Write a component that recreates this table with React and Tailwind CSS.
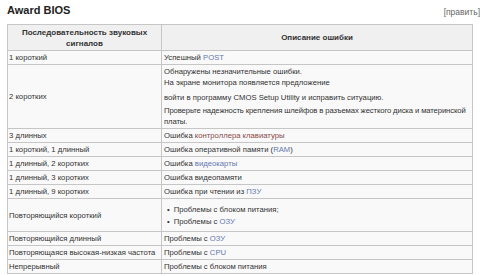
const LINK = "text-[#6477b0]";
const VISITED = "text-[#8a4a4a]";

const ROWS = [
  { seq: "1 короткий", desc: <>Успешный <span className={LINK}>POST</span></> },
  {
    seq: "2 коротких",
    desc: (
      <>
        <p>Обнаружены незначительные ошибки.<br />На экране монитора появляется предложение</p>
        <p className="mt-[4px]">войти в программу CMOS Setup Utility и исправить ситуацию.</p>
        <p className="mt-[2px] tracking-[-0.12px]">Проверьте надежность крепления шлейфов в разъемах жесткого диска и материнской платы.</p>
      </>
    ),
  },
  { seq: "3 длинных", desc: <>Ошибка <span className={VISITED}>контроллера клавиатуры</span></> },
  { seq: "1 короткий, 1 длинный", desc: <>Ошибка оперативной памяти (<span className={LINK}>RAM</span>)</> },
  { seq: "1 длинный, 2 коротких", desc: <>Ошибка <span className={LINK}>видеокарты</span></> },
  { seq: "1 длинный, 3 коротких", desc: <>Ошибка видеопамяти</> },
  { seq: "1 длинный, 9 коротких", desc: <>Ошибка при чтении из <span className={LINK}>ПЗУ</span></> },
  {
    seq: "Повторяющийся короткий",
    desc: (
      <ul className="my-[3.5px] ml-[3px]">
        <li className="flex gap-[4px]"><span>•</span><span>Проблемы с блоком питания;</span></li>
        <li className="flex gap-[4px] mt-[1px]"><span>•</span><span>Проблемы с <span className={LINK}>ОЗУ</span></span></li>
      </ul>
    ),
  },
  { seq: "Повторяющийся длинный", desc: <>Проблемы с <span className={LINK}>ОЗУ</span></> },
  { seq: "Повторяющаяся высокая-низкая частота", desc: <>Проблемы с <span className={LINK}>CPU</span></> },
  { seq: "Непрерывный", desc: <>Проблемы с блоком питания</> },
];

export default function App() {
  return (
    <div className="w-[480px] h-[276px] overflow-hidden bg-white text-[#333] font-['Liberation_Sans',Arial,sans-serif]">
      {/* Heading */}
      <div className="flex items-center justify-between pl-[7px] pr-0 pt-[3px] h-[17px]">
        <h2 className="text-[11px] leading-[13px] font-bold text-[#222]">Award BIOS</h2>
        <span className="text-[8.5px] leading-[10px] text-[#666] mt-[3px]">[править]</span>
      </div>

      <table className="ml-[7px] mt-[7px] w-[466px] border-collapse text-[7.7px] leading-[11px] bg-[#f9f9f9]">
        <thead>
          <tr className="bg-[#f0f0f0] h-[26px]">
            <th className="w-[154px] border border-[#c6c6c6] px-[2px] py-[1px] text-[8px] font-bold text-center leading-[11px]">
              Последовательность звуковых сигналов
            </th>
            <th className="border border-[#c6c6c6] px-[2px] py-[1px] text-[8px] font-bold text-center">Описание ошибки</th>
          </tr>
        </thead>
        <tbody>
          {ROWS.map((r) => (
            <tr key={r.seq}>
              <td className="border border-[#c6c6c6] px-[1px] py-[1px] align-middle whitespace-nowrap">{r.seq}</td>
              <td className="border border-[#c6c6c6] pl-[2px] pr-[1px] py-[1px] align-middle">{r.desc}</td>
            </tr>
          ))}
        </tbody>
      </table>
    </div>
  );
}
